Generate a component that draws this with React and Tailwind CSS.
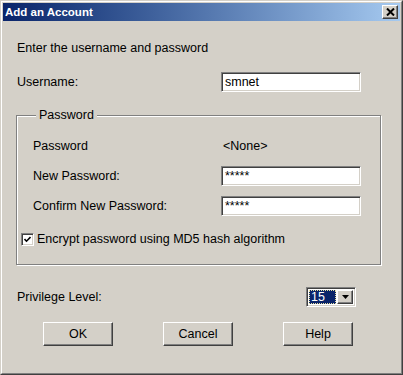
import React from 'react';

// Win2000-style bevels, reused across the dialog
const raised = "border border-t-white border-l-white border-b-[#404040] border-r-[#404040] shadow-[inset_-1px_-1px_0_#808080]";
const sunken = "border border-t-[#808080] border-l-[#808080] border-b-white border-r-white shadow-[inset_1px_1px_0_#404040,inset_-1px_-1px_0_#d4d0c8]";

function TextBox({ value }) {
  return (
    <div className={`w-[140px] h-[20px] bg-white ${sunken} flex items-center pl-[3px] leading-[14px]`}>
      {value}
    </div>
  );
}

function Row({ label, children, className = "" }) {
  return (
    <div className={`flex items-center h-[20px] ${className}`}>
      <span className="w-[188px] leading-[14px]">{label}</span>
      {children}
    </div>
  );
}

function Button({ children }) {
  return (
    <button className={`w-[70px] h-[24px] bg-[#d4d0c8] ${raised} leading-[14px] text-[12.5px]`}>
      {children}
    </button>
  );
}

export default function App() {
  return (
    <div className="w-[403px] h-[375px] bg-[#d4d0c8] border border-t-[#d4d0c8] border-l-[#d4d0c8] border-b-[#404040] border-r-[#404040] font-['Liberation_Sans',Arial,sans-serif] text-[12.5px] text-black">
      <div className="h-full border border-t-white border-l-white border-b-[#808080] border-r-[#808080] p-px flex flex-col">

        {/* Title bar */}
        <div className="h-[18px] bg-linear-to-r from-[#0a246a] to-[#a6caf0] flex items-center justify-between pl-[2px] pr-[2px]">
          <span className="text-white font-bold text-[11.5px] leading-[14px]">Add an Account</span>
          <div className={`w-[16px] h-[14px] bg-[#d4d0c8] ${raised} flex items-center justify-center`}>
            <svg width="9" height="8" viewBox="0 0 9 8">
              <path d="M1 0.5 L8 7.5 M8 0.5 L1 7.5" stroke="#000" strokeWidth="2" />
            </svg>
          </div>
        </div>

        {/* Body */}
        <div className="flex flex-col">
          <div className="mt-[20px] ml-[14px] leading-[14px]">Enter the username and password</div>

          <div className="mt-[17px] ml-[14px] flex items-center h-[20px]">
            <span className="w-[204px] leading-[14px]">Username:</span>
            <TextBox value="smnet" />
          </div>

          {/* Password group */}
          <div className="relative mt-[23px] ml-[13px] w-[365px] h-[150px] border border-[#808080] shadow-[inset_1px_1px_0_#fff,1px_1px_0_#fff]">
            <span className="absolute left-[19px] top-[-8px] px-[3px] bg-[#d4d0c8] leading-[14px]">Password</span>
            <div className="flex flex-col pt-[20px] pl-[16px]">
              <Row label="Password">
                <span className="ml-[2px] leading-[14px]">&lt;None&gt;</span>
              </Row>
              <Row label="New Password:" className="mt-[10px]">
                <TextBox value="*****" />
              </Row>
              <Row label="Confirm New Password:" className="mt-[10px]">
                <TextBox value="*****" />
              </Row>
              <div className="mt-[13px] -ml-[12px] flex items-center h-[20px]">
                <div className={`w-[13px] h-[13px] bg-white ${sunken} flex items-center justify-center`}>
                  <svg width="7" height="7" viewBox="0 0 7 7">
                    <path d="M0.5 3 L2.5 5.2 L6.5 1" fill="none" stroke="#000" strokeWidth="1.6" />
                  </svg>
                </div>
                <span className="ml-[3px] leading-[14px]">Encrypt password using MD5 hash algorithm</span>
              </div>
            </div>
          </div>

          {/* Privilege level */}
          <div className="mt-[22px] ml-[14px] flex items-center h-[20px]">
            <span className="w-[289px] leading-[14px]">Privilege Level:</span>
            <div className={`w-[50px] h-[20px] ${sunken} bg-white flex p-[2px] gap-px`}>
              <div className="flex-1 bg-[#0a246a] border border-dotted border-[#e8e0a0] text-white flex items-center pl-px leading-[14px]">15</div>
              <div className={`w-[16px] bg-[#d4d0c8] ${raised} flex items-center justify-center`}>
                <svg width="7" height="4" viewBox="0 0 7 4">
                  <path d="M0 0 H7 L3.5 4 Z" fill="#000" />
                </svg>
              </div>
            </div>
          </div>

          {/* Buttons */}
          <div className="mt-[15px] ml-[40px] flex gap-[50px]">
            <Button>OK</Button>
            <Button>Cancel</Button>
            <Button>Help</Button>
          </div>
        </div>
      </div>
    </div>
  );
}
